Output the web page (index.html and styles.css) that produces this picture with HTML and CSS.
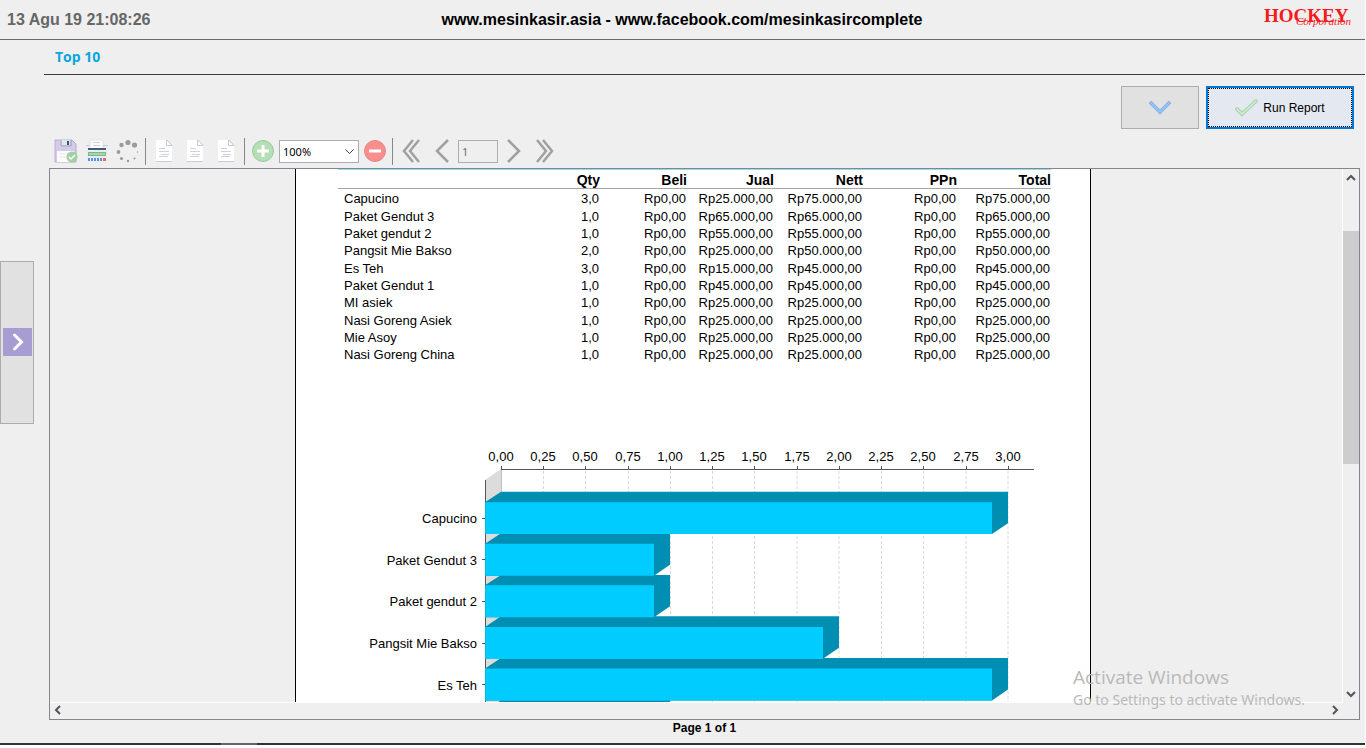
FILE: index.html
```html
<!DOCTYPE html>
<html lang="id">
<head>
<meta charset="utf-8">
<title>Top 10</title>
<link rel="stylesheet" href="styles.css">
</head>
<body>
<div class="app">
  <header class="header">
    <time class="clock">13 Agu 19 21:08:26</time>
    <div class="site">www.mesinkasir.asia - www.facebook.com/mesinkasircomplete</div>
    <svg class="logo" width="96" height="30" role="img" aria-label="HOCKEY Corporation">
      <text class="logo-main" x="3" y="17">HOCKEY</text>
      <text class="logo-sub" x="35" y="20">Corporation</text>
    </svg>
  </header>

  <div class="body">
    <aside class="rail">
      <button class="rail-toggle" type="button" aria-label="Open menu">
        <svg width="29" height="28"><rect width="29" height="28" fill="#a79dd3"/><path d="M11.500 7l7 7-7 7" fill="none" stroke="#fff" stroke-width="3" stroke-linecap="round"/></svg>
      </button>
    </aside>

    <main class="main">
      <h1 class="title">Top 10</h1>

      <div class="actions">
        <button class="btn btn-expand" type="button" aria-label="Show filter">
          <svg width="24" height="18"><path d="M2 3l10 10L22 3" fill="none" stroke="#7da7dd" stroke-width="3.500"/><path d="M2.500 3.500l9.500 9.500 9.500-9.500" fill="none" stroke="#93c6fb" stroke-width="2"/></svg>
        </button>
        <button class="btn btn-run" type="button">
          <svg width="23" height="18"><path d="M2 10l5 5L21 2" fill="none" stroke="#96c99b" stroke-width="3.500" stroke-linecap="round"/><path d="M2 10l5 5L21 2" fill="none" stroke="#cdeccd" stroke-width="2" stroke-linecap="round"/></svg>
          <span>Run Report</span>
        </button>
      </div>

      <div class="toolbar">
        <button class="tool" type="button" aria-label="Save">
          <svg width="24" height="24"><path d="M1 1h17l4 4v18H1z" fill="#d8c9ec" stroke="#b9abd6"/><path d="M6 1h11v7H6z" fill="#dfe7ee"/><path d="M7 1v6h10V1" fill="none" stroke="#8799b0"/><rect x="13" y="2" width="2" height="4" fill="#3d5270"/><rect x="3" y="12" width="17" height="11" fill="#fbfbfc"/><path d="M5 15h11M5 18h8" stroke="#e5e8ed"/><circle cx="18" cy="18" r="5.500" fill="#9fd1a1"/><path d="M15 18l2 2 4-4" fill="none" stroke="#fff" stroke-width="1.500"/></svg>
        </button>
        <button class="tool" type="button" aria-label="Print">
          <svg width="24" height="24"><path d="M2 7h20v16H2z" fill="#e9edf2"/><path d="M1 6.500h22" stroke="#c6ccd4"/><path d="M5 1h13v9H5z" fill="#fff" stroke="#dfe3e8"/><path d="M8 3.500h7M8 6.500h7" stroke="#cbd1d8"/><path d="M3 10h18" stroke="#465c79" stroke-width="2"/><rect x="3.500" y="13.500" width="17" height="3" fill="#a5d6a5" stroke="#80b78a"/><path d="M3 20.500h15" stroke="#5d91e0" stroke-width="3" stroke-dasharray="2 1"/><path d="M18 20.500h3" stroke="#f06464" stroke-width="3"/></svg>
        </button>
        <button class="tool" type="button" aria-label="Reload">
          <svg width="24" height="24" fill="#9b9b9b"><circle cx="12" cy="3.500" r="2.600"/><circle cx="18.500" cy="6" r="2.600"/><circle cx="5.500" cy="6" r="2.200"/><circle cx="2.500" cy="13" r="1.900"/><circle cx="5.500" cy="19.500" r="1.600"/><circle cx="12" cy="22" r="1.200"/><circle cx="18.500" cy="19.500" r="1"/><circle cx="21.500" cy="13" r=".7"/></svg>
        </button>
        <span class="sep"></span>
        <div class="group">
          <button class="tool" type="button" aria-label="Actual size">
            <svg width="18" height="24"><use href="#doc"/></svg>
          </button>
          <button class="tool" type="button" aria-label="Fit page">
            <svg width="18" height="24"><use href="#doc"/></svg>
          </button>
          <button class="tool" type="button" aria-label="Fit width">
            <svg width="18" height="24"><use href="#doc"/></svg>
          </button>
        </div>
        <span class="sep"></span>
        <button class="tool" type="button" aria-label="Zoom in">
          <svg width="24" height="24"><circle cx="12" cy="12" r="10.500" fill="#b4deb5" stroke="#9bcd9e"/><path d="M6 12h12M12 6v12" stroke="#fff" stroke-width="3"/></svg>
        </button>
        <div class="zoom">
          <select class="zoom-select" aria-label="Zoom"><option>100%</option></select>
          <svg class="zoom-arrow" width="9" height="6"><path d="M.5.5l4 4 4-4" fill="none" stroke="#444"/></svg>
        </div>
        <button class="tool" type="button" aria-label="Zoom out">
          <svg width="24" height="24"><circle cx="12" cy="12" r="10.500" fill="#f98e8c" stroke="#e58787"/><path d="M6 12h12" stroke="#fff" stroke-width="3"/></svg>
        </button>
        <span class="sep"></span>
        <button class="tool" type="button" aria-label="First page">
          <svg class="nav" width="18" height="24"><path d="M11 1L2 12l9 11M17 1L8 12l9 11"/></svg>
        </button>
        <button class="tool" type="button" aria-label="Previous page">
          <svg class="nav" width="14" height="24"><path d="M13 1L2 12l11 11"/></svg>
        </button>
        <input class="page-no" type="text" value="1" aria-label="Page">
        <button class="tool" type="button" aria-label="Next page">
          <svg class="nav" width="14" height="24"><path d="M1 1l11 11L1 23"/></svg>
        </button>
        <button class="tool" type="button" aria-label="Last page">
          <svg class="nav" width="18" height="24"><path d="M1 1l9 11-9 11M7 1l9 11-9 11"/></svg>
        </button>
      </div>

      <section class="viewer" aria-label="Report">
        <div class="viewport">
          <article class="page">
            <table class="report">
              <colgroup><col class="c-name"><col class="c-qty"><col class="c-beli"><col class="c-jual"><col class="c-nett"><col class="c-ppn"><col class="c-total"></colgroup>
              <thead>
                <tr><th></th><th>Qty</th><th>Beli</th><th>Jual</th><th>Nett</th><th>PPn</th><th>Total</th></tr>
              </thead>
              <tbody>
                <tr><td>Capucino</td><td>3,0</td><td>Rp0,00</td><td>Rp25.000,00</td><td>Rp75.000,00</td><td>Rp0,00</td><td>Rp75.000,00</td></tr>
                <tr><td>Paket Gendut 3</td><td>1,0</td><td>Rp0,00</td><td>Rp65.000,00</td><td>Rp65.000,00</td><td>Rp0,00</td><td>Rp65.000,00</td></tr>
                <tr><td>Paket gendut 2</td><td>1,0</td><td>Rp0,00</td><td>Rp55.000,00</td><td>Rp55.000,00</td><td>Rp0,00</td><td>Rp55.000,00</td></tr>
                <tr><td>Pangsit Mie Bakso</td><td>2,0</td><td>Rp0,00</td><td>Rp25.000,00</td><td>Rp50.000,00</td><td>Rp0,00</td><td>Rp50.000,00</td></tr>
                <tr><td>Es Teh</td><td>3,0</td><td>Rp0,00</td><td>Rp15.000,00</td><td>Rp45.000,00</td><td>Rp0,00</td><td>Rp45.000,00</td></tr>
                <tr><td>Paket Gendut 1</td><td>1,0</td><td>Rp0,00</td><td>Rp45.000,00</td><td>Rp45.000,00</td><td>Rp0,00</td><td>Rp45.000,00</td></tr>
                <tr><td>MI asiek</td><td>1,0</td><td>Rp0,00</td><td>Rp25.000,00</td><td>Rp25.000,00</td><td>Rp0,00</td><td>Rp25.000,00</td></tr>
                <tr><td>Nasi Goreng Asiek</td><td>1,0</td><td>Rp0,00</td><td>Rp25.000,00</td><td>Rp25.000,00</td><td>Rp0,00</td><td>Rp25.000,00</td></tr>
                <tr><td>Mie Asoy</td><td>1,0</td><td>Rp0,00</td><td>Rp25.000,00</td><td>Rp25.000,00</td><td>Rp0,00</td><td>Rp25.000,00</td></tr>
                <tr><td>Nasi Goreng China</td><td>1,0</td><td>Rp0,00</td><td>Rp25.000,00</td><td>Rp25.000,00</td><td>Rp0,00</td><td>Rp25.000,00</td></tr>
              </tbody>
            </table>

            <svg class="chart" width="713" height="262" viewBox="338 440 713 262" role="img" aria-label="Qty per item">
              <path class="wall" d="M485 480l16-11v233h-16z"/>
              <path class="wall-edge" d="M501.500 469v233"/>
              <path class="grid" d="M543.500 471v231M585.500 471v231M628.500 471v231M670.500 471v231M712.500 471v231M754.500 471v231M797 471v231M839 471v231M881.500 471v231M923.500 471v231M966 471v231M1008 471v231"/>
              <path class="axis" d="M501 469.500h533M501.500 466v3M543.500 466v3M585.500 466v3M628.500 466v3M670.500 466v3M712.500 466v3M754.500 466v3M797.500 466v3M839.500 466v3M881.500 466v3M923.500 466v3M966.500 466v3M1008.500 466v3M485.500 480v222M482 518.500h3M482 559.500h3M482 601.500h3M482 643.500h3M482 684.500h3"/>
              <g class="ticks">
                <text x="501" y="461">0,00</text><text x="543" y="461">0,25</text><text x="585" y="461">0,50</text><text x="628" y="461">0,75</text><text x="670" y="461">1,00</text><text x="712" y="461">1,25</text><text x="754" y="461">1,50</text><text x="797" y="461">1,75</text><text x="839" y="461">2,00</text><text x="881" y="461">2,25</text><text x="923" y="461">2,50</text><text x="966" y="461">2,75</text><text x="1008" y="461">3,00</text>
              </g>
              <g class="names">
                <text x="477" y="523">Capucino</text><text x="477" y="565">Paket Gendut 3</text><text x="477" y="606">Paket gendut 2</text><text x="477" y="648">Pangsit Mie Bakso</text><text x="477" y="690">Es Teh</text>
              </g>
              <path class="side" d="M485 711l16-10.700h169V702H485z"/>
              <path class="side" d="M485 668.500l16-10.500h507v31.500l-16 11H485z"/><path class="face" d="M485.300 668.500H992v32H485.300z"/>
              <path class="side" d="M485 627l16-10.700h338v31.500l-16 11H485z"/><path class="face" d="M485.300 627H823v32H485.300z"/>
              <path class="side" d="M485 585.300L501 575h169v31.300l-16 11H485z"/><path class="face" d="M485.300 585.300H654v32H485.300z"/>
              <path class="side" d="M485 543.700l16-10.500h169v31.500l-16 11H485z"/><path class="face" d="M485.300 543.700H654v32H485.300z"/>
              <path class="side" d="M485 502.300l16-10.500h507v31.500L992 534H485z"/><path class="face" d="M485.300 502.300H992V534H485.300z"/>
            </svg>
          </article>
        </div>

        <div class="vbar">
          <button class="bar-btn" type="button" aria-label="Scroll up"><svg class="arrow" width="10" height="8"><path d="M1 6l4-4 4 4"/></svg></button>
          <div class="track"><div class="thumb"></div></div>
          <button class="bar-btn" type="button" aria-label="Scroll down"><svg class="arrow" width="10" height="8"><path d="M1 2l4 4 4-4"/></svg></button>
        </div>
        <div class="hbar">
          <button class="bar-btn" type="button" aria-label="Scroll left"><svg class="arrow" width="8" height="10"><path d="M6 1L2 5l4 4"/></svg></button>
          <button class="bar-btn" type="button" aria-label="Scroll right"><svg class="arrow" width="8" height="10"><path d="M2 1l4 4-4 4"/></svg></button>
        </div>

        <div class="watermark">
          <div class="wm-title">Activate Windows</div>
          <div class="wm-text">Go to Settings to activate Windows.</div>
        </div>
      </section>

      <footer class="status">Page 1 of 1</footer>
    </main>
  </div>

  <div class="taskbar"><span class="task"></span></div>
</div>

<svg class="defs" width="0" height="0" aria-hidden="true">
  <symbol id="doc" viewBox="0 0 18 24">
    <path d="M1 1h11l5 6v16H1z" fill="#fff"/>
    <path d="M1 22.500h16" stroke="#c7ccd5"/>
    <path d="M11.500 1v5.500H17M12 1l5 5.500" fill="none" stroke="#c3cad5"/>
    <path d="M4 9.500h6M4 12.500h10M6 15.500h8M4 17.500h9" stroke="#cdd3dc"/>
  </symbol>
</svg>
</body>
</html>
```
FILE: styles.css
```css
* {
  box-sizing: border-box;
}

body {
  margin: 0;
  background: #fff;
  color: #000;
  font-family: "Liberation Sans", Arial, sans-serif;
  font-size: 13px;
}

button,
input,
select {
  margin: 0;
  padding: 0;
  font: inherit;
  color: inherit;
}

svg {
  display: block;
  flex: none;
}

.app {
  display: flex;
  flex-direction: column;
  height: calc(100vh - 3px);
  margin-right: 1px;
  background: #efefef;
}

/* Header */
.header {
  display: grid;
  grid-template-columns: 1fr auto 1fr;
  align-items: center;
  flex: none;
  height: 40px;
  padding: 0 8px 0 7px;
  border-bottom: 1px solid #6a6a6a;
  font-size: 16px;
  font-weight: bold;
}

.clock {
  color: #666;
}

.logo {
  justify-self: end;
  align-self: center;
  overflow: visible;
  fill: #f8191c;
}

.logo-main {
  font: bold 19px "Liberation Serif", "Times New Roman", serif;
}

.logo-sub {
  font: italic 11px "Liberation Serif", "Times New Roman", serif;
}

/* Body */
.body {
  display: flex;
  flex: 1;
  min-height: 0;
}

.rail {
  flex: none;
  width: 44px;
  padding-top: 221px;
}

.rail-toggle {
  display: flex;
  align-items: center;
  justify-content: center;
  width: 34px;
  height: 163px;
  padding-bottom: 1px;
  border: 1px solid #adadad;
  background: #e1e1e1;
}

.main {
  display: flex;
  flex: 1;
  flex-direction: column;
  min-width: 0;
}

.title {
  flex: none;
  height: 35px;
  margin: 0;
  padding-left: 11px;
  border-bottom: 1px solid #3c3c3c;
  color: #0aa6de;
  font: bold 14px/34px "Open Sans", sans-serif;
}

.actions {
  display: flex;
  flex: none;
  justify-content: flex-end;
  gap: 7px;
  padding: 11px 11px 9px 0;
}

.btn {
  display: flex;
  align-items: center;
  justify-content: center;
  gap: 5px;
  height: 43px;
  border: 1px solid #adadad;
  background: #e1e1e1;
  font-size: 12px;
}

.btn-expand {
  width: 78px;
}

.btn-run {
  width: 148px;
  border: 2px solid #0078d7;
  outline: 1px dotted #000;
  outline-offset: -3px;
  background: #e3e8f1;
}

/* Toolbar */
.toolbar {
  display: flex;
  flex: none;
  height: 27px;
  margin-bottom: 3px;
  padding-left: 6px;
}

.group {
  display: flex;
  margin-right: 1px;
}

.tool {
  display: flex;
  align-items: center;
  justify-content: center;
  width: 31px;
  height: 26px;
  border: 0;
  background: none;
}

.sep {
  width: 1px;
  height: 27px;
  margin: 0 2px;
  background: #888;
}

.nav {
  fill: none;
  stroke: #a0a0a0;
  stroke-width: 2.5;
}

.zoom {
  display: grid;
  align-items: center;
  width: 80px;
  margin-left: 1px;
}

.zoom-select,
.page-no {
  align-self: center;
  height: 23px;
  border: 1px solid #acacb4;
  border-radius: 0;
  font: 11px "Noto Sans", sans-serif;
}

.zoom-select {
  grid-area: 1 / 1;
  appearance: none;
  width: 100%;
  padding-left: 3px;
  background: #fff;
}

.zoom-arrow {
  grid-area: 1 / 1;
  justify-self: end;
  margin-right: 5px;
  pointer-events: none;
}

.page-no {
  width: 40px;
  margin-left: 1px;
  padding-left: 3px;
  background: #efefef;
  color: #6d6d6d;
}

/* Report viewer */
.viewer {
  position: relative;
  display: grid;
  grid-template: minmax(0, 1fr) 17px / minmax(0, 1fr) 16px;
  flex: 1;
  min-height: 0;
  margin: 0 5px 0 5px;
  border: 1px solid #85858c;
}

.viewport {
  display: flex;
  justify-content: center;
  padding-right: 6px;
  border-right: 1px solid #fff;
  overflow: hidden;
}

.page {
  flex: none;
  padding: 0 39px 0 42px;
  border: solid #000;
  border-width: 0 1px;
  background: #fff;
}

.report {
  width: 713px;
  border-collapse: separate;
  border-spacing: 0;
  border-top: 1px solid #8fdcf3;
  table-layout: fixed;
}

.c-name { width: 180px; }
.c-qty { width: 82px; }
.c-beli { width: 87px; }
.c-jual { width: 87px; }
.c-nett { width: 89px; }
.c-ppn { width: 94px; }
.c-total { width: 94px; }

.report th {
  height: 19px;
  padding: 2px 0 0;
  border-bottom: 1px solid #a6a6a6;
  font-size: 14px;
  line-height: 16px;
  text-align: right;
}

.report td {
  height: 17px;
  padding: 2px 1px 0 0;
  line-height: 15px;
  text-align: right;
  vertical-align: top;
  white-space: nowrap;
}

.report tr:nth-child(3n + 1) td {
  height: 18px;
}

.report td:first-child {
  padding-left: 6px;
  text-align: left;
}

/* Chart */
.chart {
  margin-top: 77px;
  font-size: 13px;
}

.wall { fill: #dcdcdc; }
.wall-edge { stroke: #c0c0c0; }

.grid {
  stroke: #d9d9d9;
  stroke-dasharray: 3 2;
}

.axis {
  fill: none;
  stroke: #555;
}

.ticks { text-anchor: middle; }
.names { text-anchor: end; }
.side { fill: #008fb3; }
.face { fill: #0cf; }

/* Scroll bars */
.vbar {
  display: flex;
  flex-direction: column;
}

.hbar {
  display: flex;
  grid-column: 1 / -1;
  justify-content: space-between;
  margin-right: 16px;
  border-top: 1px solid #fff;
}

.bar-btn {
  display: flex;
  align-items: center;
  justify-content: center;
  flex: none;
  width: 15px;
  height: 17px;
  border: 0;
  background: none;
}

.hbar .bar-btn {
  width: 16px;
  height: 14px;
}

.arrow {
  fill: none;
  stroke: #555;
  stroke-width: 2;
}

.track {
  flex: 1;
  padding-top: 45px;
}

.thumb {
  height: 233px;
  background: #cdcdcd;
}

/* System overlay */
.watermark {
  position: absolute;
  right: 50px;
  bottom: 9px;
  width: 236px;
  color: #b9b9b9;
  font-family: "Noto Sans", sans-serif;
  white-space: nowrap;
  pointer-events: none;
}

.wm-title {
  font-family: "Open Sans", sans-serif;
  font-size: 19px;
  line-height: 26px;
}

.wm-text {
  font-size: 14px;
  line-height: 20px;
}

.status {
  flex: none;
  height: 23px;
  margin: 0 5px;
  font-size: 12px;
  font-weight: bold;
  line-height: 17px;
  text-align: center;
}

.taskbar {
  flex: none;
  height: 2px;
  padding-left: 221px;
  background: #333;
}

.task {
  display: block;
  width: 36px;
  height: 2px;
  background: #666;
}

.defs {
  position: absolute;
}
```
